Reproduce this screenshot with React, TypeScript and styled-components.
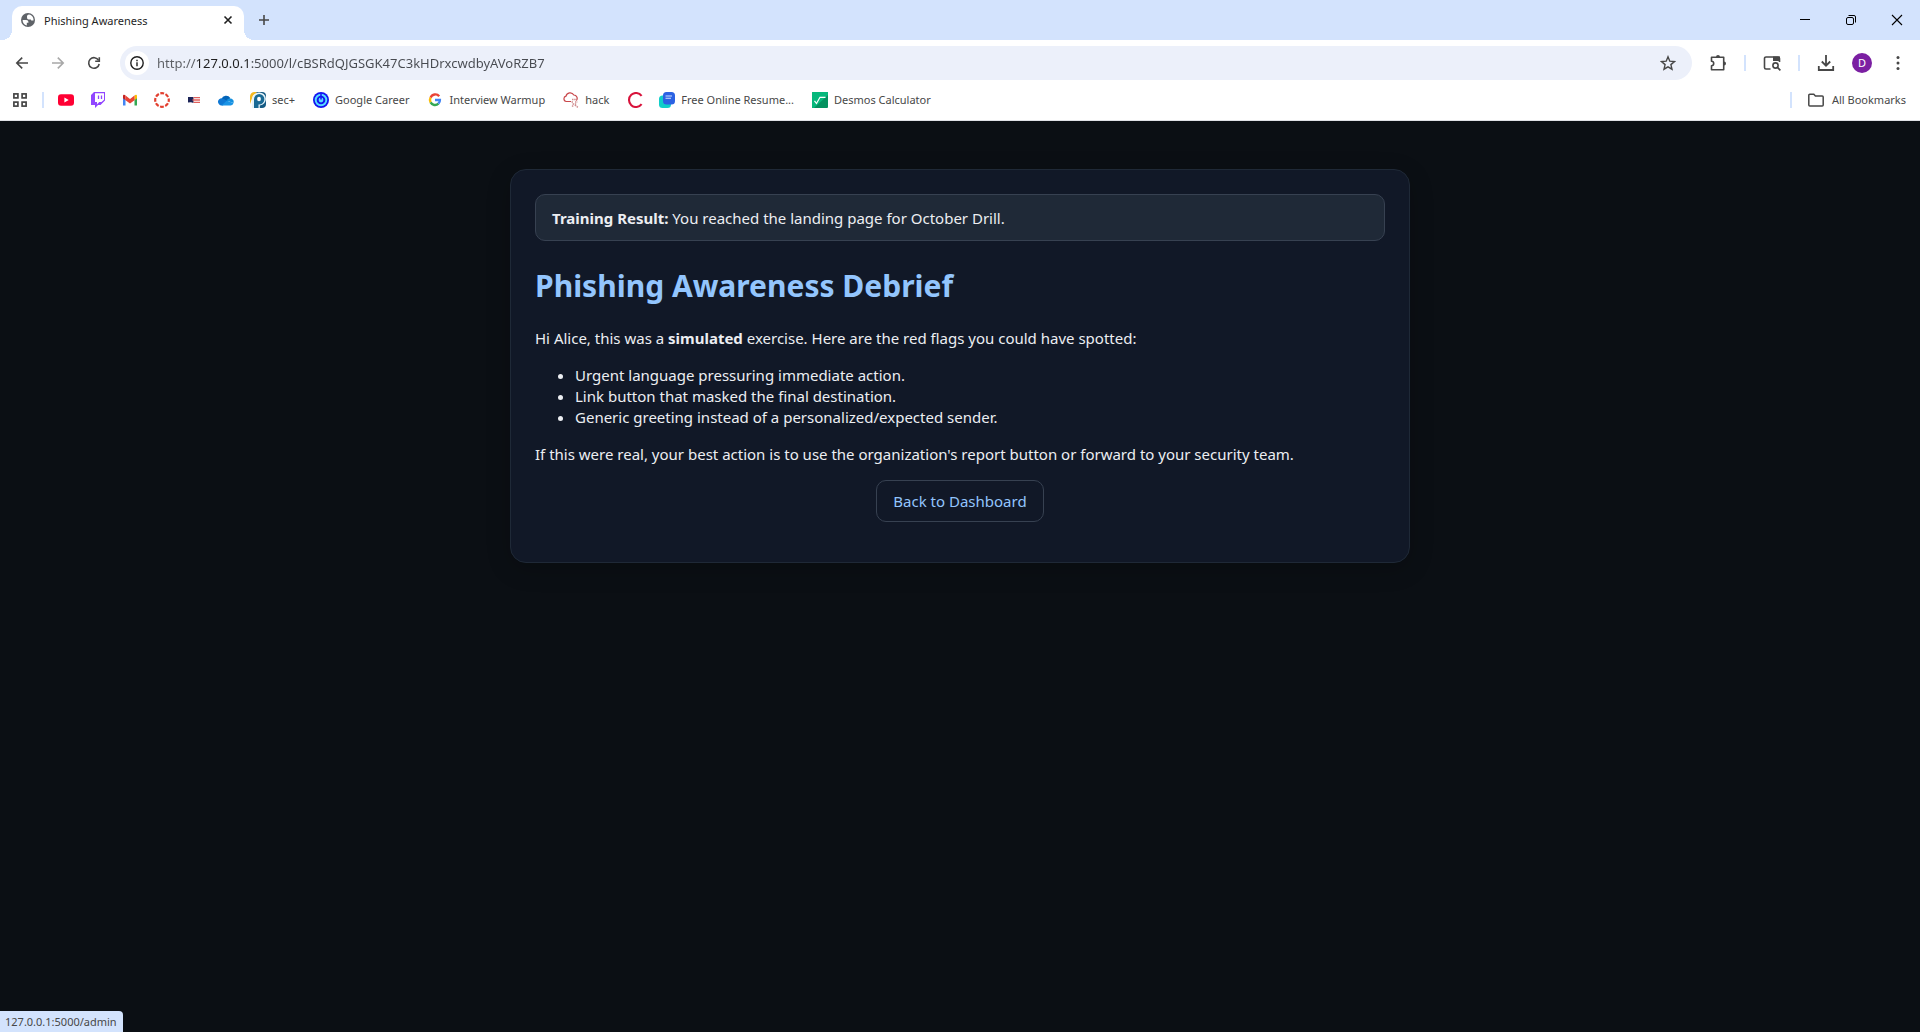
import React from "react";
import styled, { createGlobalStyle } from "styled-components";

const GlobalStyle = createGlobalStyle`
  *, *::before, *::after { box-sizing: border-box; }
  body { margin: 0; background: #0b0f14; font-family: "Noto Sans", "Open Sans", sans-serif; }
  button { font: inherit; border: 0; padding: 0; background: none; color: inherit; }
  a { text-decoration: none; color: inherit; }
  svg { display: block; flex: none; }
`;

const Window = styled.div`
  display: flex;
  flex-direction: column;
  min-height: 100vh;
`;

const TabStrip = styled.header`
  display: flex;
  align-items: flex-end;
  height: 40px;
  padding-left: 12px;
  background: #d3e3fd;
  color: #1f1f1f;
`;

const Tab = styled.div`
  position: relative;
  display: flex;
  align-items: center;
  width: 232px;
  height: 34px;
  padding: 0 8px 6px 8px;
  background: #fff;
  border-radius: 10px 10px 0 0;
  font-size: 11px;

  &::before,
  &::after {
    content: "";
    position: absolute;
    bottom: 0;
    width: 10px;
    height: 10px;
  }
  &::before {
    right: 100%;
    background: radial-gradient(circle at 0 0, transparent 10px, #fff 10px);
  }
  &::after {
    left: 100%;
    background: radial-gradient(circle at 100% 0, transparent 10px, #fff 10px);
  }
`;

const TabTitle = styled.span`
  flex: 1;
  padding-left: 8px;
`;

const IconButton = styled.button<{ $size?: number; $color?: string }>`
  display: grid;
  place-items: center;
  flex: none;
  width: ${(p) => p.$size ?? 36}px;
  height: ${(p) => p.$size ?? 36}px;
  color: ${(p) => p.$color ?? "#474747"};
`;

const NewTab = styled(IconButton)`
  margin: 0 0 6px 6px;
`;

const CaptionButtons = styled.div`
  display: flex;
  align-self: flex-start;
  margin-left: auto;
`;

const CaptionButton = styled.button`
  display: grid;
  place-items: center;
  width: 46px;
  height: 40px;
  color: #000;
`;

const Toolbar = styled.div`
  display: flex;
  align-items: center;
  height: 46px;
  padding: 0 4px;
  background: #fff;
`;

const Omnibox = styled.label`
  display: flex;
  align-items: center;
  flex: 1;
  height: 34px;
  margin: 0 8px;
  padding: 0 6px 0 5px;
  border-radius: 17px;
  background: #ecf0fa;
`;

const SiteInfo = styled.span`
  display: grid;
  place-items: center;
  flex: none;
  width: 24px;
  height: 24px;
  border-radius: 50%;
  background: #fff;
  color: #1f1f1f;
`;

/* The host part of the address is darker than the scheme and the path. */
const Address = styled.input`
  flex: 1;
  min-width: 0;
  height: 24px;
  margin-left: 8px;
  padding: 0;
  border: 0;
  outline: 0;
  font: 13px/24px "Noto Sans", "Open Sans", sans-serif;
  color: #474747;
  -webkit-text-fill-color: transparent;
  background: linear-gradient(90deg, #5b5e63 40px, #1f1f1f 40px 93px, #474a50 93px);
  background-clip: text;
  -webkit-background-clip: text;
`;

const Divider = styled.span<{ $gap?: number }>`
  flex: none;
  width: 2px;
  height: 16px;
  margin: 0 ${(p) => p.$gap ?? 8}px;
  background: #d3e3fd;
`;

const Avatar = styled.span`
  display: grid;
  place-items: center;
  width: 20px;
  height: 20px;
  border-radius: 50%;
  background: #7b1fa2;
  color: #fff;
  font-size: 11px;
  line-height: 20px;
`;

const BookmarkBar = styled.nav`
  display: flex;
  align-items: center;
  height: 35px;
  padding: 0 6px 6px 4px;
  background: #fff;
  border-bottom: 1px solid #dfe1e5;
  color: #474747;
  font-size: 11px;
  line-height: 16px;
`;

const Bookmark = styled.a<{ $labelled: boolean }>`
  display: flex;
  align-items: center;
  gap: 6px;
  height: 28px;
  padding: 0 ${(p) => (p.$labelled ? 10 : 8)}px 0 8px;
  white-space: nowrap;
`;

const AllBookmarks = styled.button`
  display: flex;
  align-items: center;
  gap: 8px;
  padding: 0 8px;
  white-space: nowrap;
`;

const Spacer = styled.span`
  flex: 1;
`;

const Page = styled.main`
  flex: 1;
  padding: 48px 24px;
  background: #0b0f14;
  color: #eceef2;
  font-size: 15px;
  line-height: 21px;
`;

const Card = styled.article`
  max-width: 900px;
  margin: 0 auto;
  padding: 24px;
  border: 1px solid #1f2937;
  border-radius: 16px;
  background: #111827;
  box-shadow: 0 6px 24px rgba(0, 0, 0, 0.2);
`;

const Banner = styled.div`
  padding: 13px 16px 11px;
  border: 1px solid #374151;
  border-radius: 10px;
  background: #1f2937;
`;

const Title = styled.h1`
  margin: 23px 0 20px;
  color: #93c5fd;
  font-size: 30px;
  line-height: 44px;
`;

const Paragraph = styled.p`
  margin: 16px 0;
`;

const Flags = styled.ul`
  margin: 16px 0;
  padding-left: 40px;
`;

const Actions = styled.div`
  display: flex;
  justify-content: center;
  margin: 15px 0 16px;
`;

const BackLink = styled.a`
  padding: 10px 16px;
  border: 1px solid #374151;
  border-radius: 10px;
  line-height: 20px;
  color: #93c5fd;
`;

const Advice = styled(Paragraph)`
  margin-bottom: 0;
`;

const StatusBubble = styled.div`
  position: fixed;
  left: 0;
  bottom: 0;
  padding: 0 6px 0 5px;
  border-radius: 0 4px 0 0;
  background: #d3e3fd;
  color: #474747;
  font-size: 11px;
  line-height: 21px;
`;

type SvgProps = { size?: number; box?: number; children: React.ReactNode };
const Glyph = ({ size = 16, box = 16, children }: SvgProps) => (
  <svg width={size} height={size} viewBox={`0 0 ${box} ${box}`} fill="none" stroke="currentColor" strokeWidth="1.6" aria-hidden="true">
    {children}
  </svg>
);

const Globe = () => (
  <Glyph>
    <circle cx="8" cy="8" r="7" fill="#5f6368" stroke="none" />
    <path d="M2.600 8h3.600c1.400 0 2.200.8 2.200 2v.7H6.800v2.700A5.600 5.600 0 0 1 2.600 8z" fill="#fff" stroke="none" />
    <path d="M7 4.500c0-1.100.7-1.800 2-2 1.800.3 3.200 1.300 4 2.900.5 1 .6 2.200.5 3.200h-1.600c-.7 0-1-.5-1-1.200H8.600c-.9 0-1.500-.5-1.500-1.300z" fill="#fff" stroke="none" />
  </Glyph>
);

const YouTube = () => (
  <Glyph>
    <rect x="0" y="2.2" width="16" height="11.6" rx="3" fill="#ff0033" stroke="none" />
    <path d="M6.4 5.5v5L10.7 8z" fill="#fff" stroke="none" />
  </Glyph>
);

const Twitch = () => (
  <Glyph>
    <path d="M4 0h11v8.5L10.500 13H8l-3 3v-3H1V3z" fill="#9146ff" stroke="none" />
    <path d="M5 1.200h9v6.500L11.500 10H9.300L7 12.200V10H5z" fill="#fff" stroke="none" />
    <path d="M8.500 3.500v3.500M11.500 3.500v3.500" stroke="#9146ff" strokeWidth="1.300" />
  </Glyph>
);

const Gmail = () => (
  <Glyph>
    <path d="M1 13.500h2.500V7L1 5z" fill="#4285f4" stroke="none" />
    <path d="M15 13.500h-2.500V7L15 5z" fill="#34a853" stroke="none" />
    <path d="M1 4v2.300l2.500 2V3.600C2.400 2.200 1 2.700 1 4z" fill="#c5221f" stroke="none" />
    <path d="M15 4v2.300l-2.500 2V3.600C13.600 2.200 15 2.700 15 4z" fill="#fbbc04" stroke="none" />
    <path d="M3.500 3.600L8 7l4.500-3.400v4.600L8 11.600 3.500 8.200z" fill="#ea4335" stroke="none" />
  </Glyph>
);

const Canvas = () => (
  <Glyph>
    <circle cx="8" cy="8" r="6.800" stroke="#e23f2f" strokeWidth="2.200" strokeDasharray="3.840 1.500" strokeDashoffset="1.920" />
  </Glyph>
);

const Flag = () => (
  <Glyph>
    <path d="M2 5h5.500v6L5 10.200 2 10.500z" fill="#1c2457" stroke="none" />
    <path d="M7.500 5.700h6.500M6.500 8h7.500M7.500 10.300H14" stroke="#e0605c" strokeWidth="1.300" />
  </Glyph>
);

const OneDrive = () => (
  <Glyph>
    <path d="M3.400 7.300A5 5 0 0 1 12.300 6L9 10z" fill="#0364b8" stroke="none" />
    <path d="M.8 11.900A3.500 3.500 0 0 1 5.700 7L12 10.500l-7.600 3A3.600 3.600 0 0 1 .8 11.900z" fill="#0f78d4" stroke="none" />
    <path d="M8.500 8.600A4.200 4.200 0 0 1 15.200 8a3.300 3.300 0 0 1 .2 3z" fill="#1490df" stroke="none" />
    <path d="M8.700 8.800l6.800 2.300a3.200 3.200 0 0 1-2.700 2.400H3.500z" fill="#1a94e6" stroke="none" />
  </Glyph>
);

const SecPlus = () => (
  <Glyph>
    <path d="M0 12V4.500A4.500 4.500 0 0 1 4.500 0H8L3 3.500z" fill="#f5b921" stroke="none" />
    <path d="M7 0h5a4 4 0 0 1 4 4v8a4 4 0 0 1-4 4H3V5z" fill="#155a83" stroke="none" />
    <path d="M2 16V7a7 7 0 0 1 7-6.500 6.500 6.500 0 0 1 .8 13V16z" fill="#e8f4f9" stroke="none" />
    <path d="M4 16V7.200a5.200 5.200 0 1 1 5.200 5.200H8.500V16z" fill="#1b6a94" stroke="none" />
    <ellipse cx="9" cy="7" rx="1.900" ry="2.300" fill="#fff" stroke="none" />
  </Glyph>
);

const Career = () => (
  <Glyph>
    <circle cx="8" cy="8" r="8" fill="#1414f0" stroke="none" />
    <circle cx="8" cy="8" r="5.300" stroke="#58dcff" strokeWidth="1.900" />
    <circle cx="8" cy="8" r="2.400" fill="#58dcff" stroke="none" />
    <path d="M8 1v6.500" stroke="#1414f0" strokeWidth="1.500" />
  </Glyph>
);

const Google = () => (
  <Glyph>
    <g strokeWidth="2.400">
      <path d="M12.200 4.300A5 5 0 0 0 3.600 5.600" stroke="#ea4335" />
      <path d="M3.600 5.600a5 5 0 0 0 0 4.800" stroke="#fbbc05" />
      <path d="M3.600 10.400a5 5 0 0 0 7.800 1.300" stroke="#34a853" />
      <path d="M11.400 11.700A5 5 0 0 0 12.900 8H8" stroke="#4285f4" />
    </g>
  </Glyph>
);

const Hack = () => (
  <Glyph>
    <path d="M8 9.500H3.300a2.700 2.700 0 0 1-.3-5.300A4.200 4.200 0 0 1 10.800 3a3.300 3.300 0 0 1 2.500 5.500" stroke="#c9474b" strokeWidth="1.200" />
    <path d="M9 7.500h5M8.500 10h2m1.500 0h2.500M9.500 12h4M9 14.500l2-1.500m1 0l3 2.500" stroke="#d08e90" strokeWidth="1.400" strokeDasharray="1.500 .7" />
  </Glyph>
);

const RedC = () => (
  <Glyph>
    <path d="M14.600 3.800A7 7 0 1 0 14.600 12.200" stroke="#d8133b" strokeWidth="2.100" />
  </Glyph>
);

const Resume = () => (
  <Glyph>
    <rect x="0" y="3.500" width="12" height="12.500" rx="3.500" fill="#10cfc9" stroke="none" />
    <path d="M7.500 0h5A3.500 3.500 0 0 1 16 3.500V9a3.500 3.500 0 0 1-3.500 3.500h-5A3.500 3.500 0 0 1 4 9V3.500A3.500 3.500 0 0 1 7.500 0z" fill="#2b62e3" stroke="none" />
    <path d="M6.500 4h6.500M6.500 6.300h5.500" stroke="#cfe0ff" strokeWidth="1.100" />
  </Glyph>
);

const Desmos = () => (
  <Glyph>
    <rect width="16" height="16" rx="1" fill="#04915f" stroke="none" />
    <path d="M0 1a1 1 0 0 1 1-1h15v3L2 16H0z" fill="#06b87c" stroke="none" />
    <path d="M2.500 8.800l2 2.700L8 5.300h5.500" stroke="#fff" strokeWidth="1.200" />
  </Glyph>
);

const bookmarks: { name: string; label?: string; Icon: () => React.JSX.Element }[] = [
  { name: "YouTube", Icon: YouTube },
  { name: "Twitch", Icon: Twitch },
  { name: "Gmail", Icon: Gmail },
  { name: "Canvas", Icon: Canvas },
  { name: "Flag", Icon: Flag },
  { name: "OneDrive", Icon: OneDrive },
  { name: "sec+", label: "sec+", Icon: SecPlus },
  { name: "Google Career", label: "Google Career", Icon: Career },
  { name: "Interview Warmup", label: "Interview Warmup", Icon: Google },
  { name: "hack", label: "hack", Icon: Hack },
  { name: "C", Icon: RedC },
  { name: "Resume", label: "Free Online Resume...", Icon: Resume },
  { name: "Desmos", label: "Desmos Calculator", Icon: Desmos },
];

const redFlags = [
  "Urgent language pressuring immediate action.",
  "Link button that masked the final destination.",
  "Generic greeting instead of a personalized/expected sender.",
];

export default function App() {
  return (
    <Window>
      <GlobalStyle />
      <TabStrip>
        <Tab>
          <Globe />
          <TabTitle>Phishing Awareness</TabTitle>
          <IconButton $size={16} $color="#1f1f1f" aria-label="Close tab">
            <Glyph><path d="M4.500 4.500l7 7M11.500 4.500l-7 7" /></Glyph>
          </IconButton>
        </Tab>
        <NewTab $size={28} aria-label="New tab">
          <Glyph><path d="M8 3v10M3 8h10" /></Glyph>
        </NewTab>
        <CaptionButtons>
          <CaptionButton aria-label="Minimize">
            <Glyph><path d="M3 7.500h10" strokeWidth="1" /></Glyph>
          </CaptionButton>
          <CaptionButton aria-label="Restore">
            <Glyph><path d="M5.500 3.500h5.500a1.500 1.500 0 0 1 1.500 1.500v5.500" strokeWidth="1" /><rect x="3.500" y="5.500" width="7" height="7" rx="1.500" strokeWidth="1" /></Glyph>
          </CaptionButton>
          <CaptionButton aria-label="Close">
            <Glyph><path d="M3 3l10 10M13 3L3 13" strokeWidth="1.100" /></Glyph>
          </CaptionButton>
        </CaptionButtons>
      </TabStrip>

      <Toolbar>
        <IconButton aria-label="Back"><Glyph><path d="M14 8H3M8.200 2.600L2.800 8l5.400 5.400" /></Glyph></IconButton>
        <IconButton aria-label="Forward" $color="#a8a8a8"><Glyph><path d="M2 8h11M7.800 2.600L13.200 8l-5.400 5.400" /></Glyph></IconButton>
        <IconButton aria-label="Reload"><Glyph><path d="M12.600 5.300A5.300 5.300 0 1 0 13.200 9" /><path d="M13.300 2.200v4.100H9.200" /></Glyph></IconButton>
        <Omnibox>
          <SiteInfo>
            <Glyph><circle cx="8" cy="8" r="6.200" strokeWidth="1.400" /><path d="M8 7.200v4M8 4.700v1.500" strokeWidth="1.400" /></Glyph>
          </SiteInfo>
          <Address aria-label="Address" defaultValue="http://127.0.0.1:5000/l/cBSRdQJGSGK47C3kHDrxcwdbyAVoRZB7" />
          <IconButton aria-label="Bookmark this tab">
            <Glyph><path d="M8 1.800l1.800 4.400 4.600.4-3.500 3 1.100 4.600L8 11.800l-4 2.400 1.100-4.600-3.500-3 4.600-.4z" strokeWidth="1.400" /></Glyph>
          </IconButton>
        </Omnibox>
        <IconButton aria-label="Extensions">
          <Glyph size={18} box={18}><path d="M2.500 3.300h12.200v12.400H2.500v-4a2.200 2.200 0 0 0 0-4.400z" strokeLinejoin="round" /><path d="M7 3a2 2 0 0 1 4 0zM15 7.500a2 2 0 0 1 0 4z" fill="currentColor" stroke="none" /></Glyph>
        </IconButton>
        <Divider />
        <IconButton aria-label="Search tabs">
          <Glyph size={18} box={18}><path d="M7.500 15H3a1.500 1.500 0 0 1-1.500-1.500v-9A1.500 1.500 0 0 1 3 3h12a1.500 1.500 0 0 1 1.500 1.500V8" /><path d="M10 2.500h7V7h-7z" fill="currentColor" stroke="none" /><circle cx="12.500" cy="11.500" r="2.600" /><path d="M14.400 13.400l3 3" /></Glyph>
        </IconButton>
        <Divider />
        <IconButton aria-label="Downloads">
          <Glyph size={18} box={18}><path d="M9 1v10.500M4.800 7.500L9 11.700l4.200-4.200M1.800 12v4h14.400v-4" strokeWidth="1.800" /></Glyph>
        </IconButton>
        <IconButton aria-label="Profile"><Avatar>D</Avatar></IconButton>
        <IconButton aria-label="Menu">
          <Glyph><g fill="currentColor" stroke="none"><circle cx="8" cy="2.500" r="1.500" /><circle cx="8" cy="8" r="1.500" /><circle cx="8" cy="13.500" r="1.500" /></g></Glyph>
        </IconButton>
      </Toolbar>

      <BookmarkBar aria-label="Bookmarks">
        <IconButton $size={32} aria-label="Apps">
          <Glyph><g strokeWidth="1.700"><rect x="1.900" y="1.900" width="4" height="4" /><rect x="10.100" y="1.900" width="4" height="4" /><rect x="1.900" y="10.100" width="4" height="4" /><rect x="10.100" y="10.100" width="4" height="4" /></g></Glyph>
        </IconButton>
        <Divider $gap={6} />
        {bookmarks.map(({ name, label, Icon }) => (
          <Bookmark key={name} href="#" aria-label={name} $labelled={Boolean(label)}>
            <Icon />
            {label}
          </Bookmark>
        ))}
        <Spacer />
        <Divider />
        <AllBookmarks>
          <Glyph><path d="M.8 3.300a1 1 0 0 1 1-1h4l1.600 1.700h6.800a1 1 0 0 1 1 1v8a1 1 0 0 1-1 1H1.800a1 1 0 0 1-1-1z" strokeWidth="1.500" /></Glyph>
          All Bookmarks
        </AllBookmarks>
      </BookmarkBar>

      <Page>
        <Card>
          <Banner><strong>Training Result:</strong> You reached the landing page for October Drill.</Banner>
          <Title>Phishing Awareness Debrief</Title>
          <Paragraph>
            Hi Alice, this was a <strong>simulated</strong> exercise. Here are the red flags you could have spotted:
          </Paragraph>
          <Flags>
            {redFlags.map((text) => <li key={text}>{text}</li>)}
          </Flags>
          <Advice>
            If this were real, your best action is to use the organization's report button or forward to your security team.
          </Advice>
          <Actions><BackLink href="#admin">Back to Dashboard</BackLink></Actions>
        </Card>
      </Page>

      <StatusBubble>127.0.0.1:5000/admin</StatusBubble>
    </Window>
  );
}
